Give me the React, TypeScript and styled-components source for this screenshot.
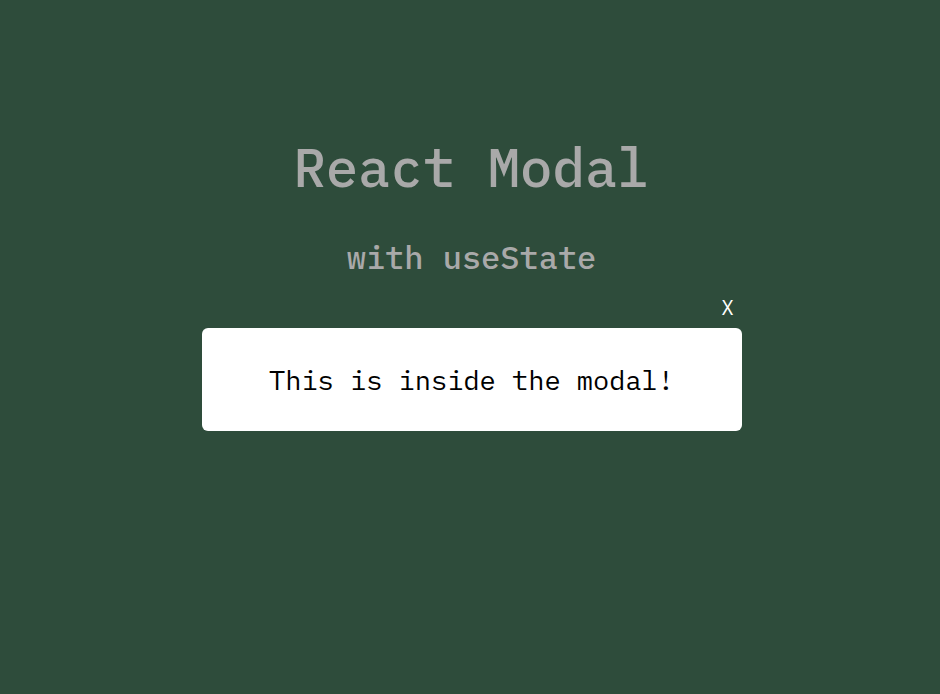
import styled, { createGlobalStyle } from 'styled-components';
import { useState } from 'react';

const GlobalStyle = createGlobalStyle`
  html, body {
    margin: 0;
    padding: 0;
    background: #2e4c3b;
    font-family: "IBM Plex Mono", "DejaVu Sans Mono", "Liberation Mono", monospace;
  }
`;

const Page = styled.main`
  display: flex;
  flex-direction: column;
  align-items: center;
  min-height: 694px;
  padding: 140px 0 0 3px;
  box-sizing: border-box;
`;

const Title = styled.h1`
  margin: 0;
  font-size: 54px;
  line-height: 1;
  font-weight: 500;
  color: #a9a9a9;
`;

const Subtitle = styled.h2`
  margin: 47px 0 0;
  font-size: 32px;
  line-height: 1;
  font-weight: 500;
  color: #a9a9a9;
`;

const ModalWrap = styled.div`
  display: flex;
  flex-direction: column;
  align-items: flex-end;
  width: 540px;
  margin-top: 25px;
`;

const CloseButton = styled.button`
  border: none;
  background: none;
  padding: 0;
  margin: 0 8px 10px 0;
  font-family: inherit;
  font-size: 20px;
  line-height: 1;
  color: #ffffff;
  cursor: pointer;
`;

const ModalBox = styled.div`
  display: flex;
  align-items: center;
  justify-content: center;
  width: 100%;
  height: 103px;
  background: #ffffff;
  border-radius: 6px;
  font-size: 27px;
  color: #000000;
`;

function App() {
  const [open, setOpen] = useState(true);

  return (
    <>
      <GlobalStyle />
      <Page>
        <Title>React Modal</Title>
        <Subtitle>with useState</Subtitle>
        {open && (
          <ModalWrap>
            <CloseButton onClick={() => setOpen(false)}>X</CloseButton>
            <ModalBox>This is inside the modal!</ModalBox>
          </ModalWrap>
        )}
      </Page>
    </>
  );
}

export default App;
